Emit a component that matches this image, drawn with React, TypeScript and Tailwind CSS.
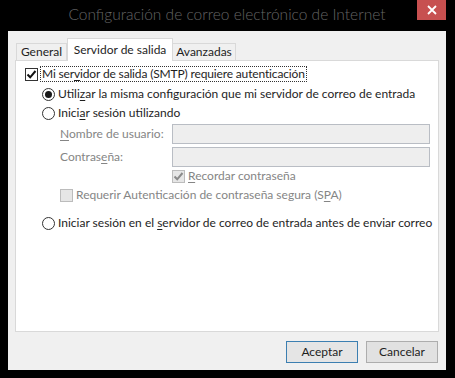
import { ReactNode } from "react";

const FONT = "font-['Lato','Liberation_Sans',sans-serif]";

function Check({ checked, disabled }: { checked?: boolean; disabled?: boolean }) {
  return (
    <span
      className={`w-[13px] h-[13px] shrink-0 border flex items-center justify-center ${
        disabled ? "border-[#bcbcbc] bg-[#e6e6e6]" : "border-[#333333] bg-white"
      }`}
    >
      {checked && (
        <svg width="11" height="11" viewBox="0 0 11 11">
          <path
            d="M1.5 5.5 L4.2 8.3 L9.5 2"
            fill="none"
            stroke={disabled ? "#8a8a8a" : "#111111"}
            strokeWidth="2"
          />
        </svg>
      )}
    </span>
  );
}

function Radio({ checked }: { checked?: boolean }) {
  return (
    <span className="w-[13px] h-[13px] shrink-0 rounded-full border border-[#333333] bg-white flex items-center justify-center">
      {checked && <span className="w-[7px] h-[7px] rounded-full bg-[#1a1a1a]" />}
    </span>
  );
}

function U({ children }: { children: ReactNode }) {
  return <span className="underline underline-offset-2">{children}</span>;
}

export default function App() {
  return (
    <div className={`w-[455px] h-[378px] bg-black ${FONT} text-[12px] text-[#1e1e1e] whitespace-nowrap overflow-hidden`}>
      {/* barra de título */}
      <div className="h-[31px] flex items-start pl-[8px]">
        <div className="flex-1 h-[31px] flex items-center justify-center text-[15.5px] font-light text-[#646464] leading-none pb-[2px] pl-[29px]">
          Configuración de correo electrónico de Internet
        </div>
        <div className="w-[29px] h-[20px] bg-[#c75050] flex items-center justify-center mr-[9px]">
          <svg width="10" height="10" viewBox="0 0 10 10">
            <path d="M1 1 L9 9 M9 1 L1 9" stroke="white" strokeWidth="1.8" />
          </svg>
        </div>
      </div>

      {/* área cliente */}
      <div className="ml-[8px] w-[438px] h-[339px] bg-[#f0f0f0] flex flex-col px-[7px]">
        {/* pestañas */}
        <div className="h-[29px] flex items-end pl-[1px]">
          <div className="h-[17px] w-[51px] border border-b-0 border-[#d9d9d9] bg-[#f0f0f0] flex items-center justify-center">
            General
          </div>
          <div className="relative z-10 -mb-px h-[23px] w-[106px] border border-b-0 border-[#d9d9d9] bg-white flex items-start justify-center pt-[2px]">
            Servidor de salida
          </div>
          <div className="h-[17px] w-[63px] border border-b-0 border-l-0 border-[#d9d9d9] bg-[#f0f0f0] flex items-center justify-center">
            Avanzadas
          </div>
        </div>

        {/* panel */}
        <div className="h-[272px] border border-[#d9d9d9] bg-white flex flex-col">
          <div className="mt-[5px] h-[16px] flex items-center pl-[9px]">
            <Check checked />
            <span className="ml-[2px] px-[1px] border border-dotted border-[#333333] leading-[14px] tracking-[-0.15px]">
              Mi ser<U>v</U>idor de salida (SMTP) requiere autenticación
            </span>
          </div>
          <div className="mt-[4px] h-[16px] flex items-center pl-[26px] gap-[3px]">
            <Radio checked />
            <span>
              Utili<U>z</U>ar la misma configuración que mi servidor de correo de entrada
            </span>
          </div>
          <div className="mt-[3px] h-[16px] flex items-center pl-[26px] gap-[3px]">
            <Radio />
            <span>
              Inici<U>a</U>r sesión utilizando
            </span>
          </div>
          <div className="mt-[3px] h-[20px] flex items-center pl-[44px] pr-[8px] text-[#858585]">
            <span className="w-[112px]">
              <U>N</U>ombre de usuario:
            </span>
            <span className="flex-1 h-[20px] border border-[#b9bdc4] bg-[#eeeeee]" />
          </div>
          <div className="mt-[3px] h-[20px] flex items-center pl-[44px] pr-[8px] text-[#858585]">
            <span className="w-[112px]">
              Contras<U>e</U>ña:
            </span>
            <span className="flex-1 h-[20px] border border-[#b9bdc4] bg-[#eeeeee]" />
          </div>
          <div className="mt-[1px] h-[16px] flex items-center pl-[156px] gap-[3px] text-[#858585]">
            <Check checked disabled />
            <span>
              <U>R</U>ecordar contraseña
            </span>
          </div>
          <div className="mt-[3px] h-[16px] flex items-center pl-[44px] gap-[3px] text-[#858585]">
            <Check disabled />
            <span>
              Requerir Autenticación de contraseña segura (S<U>P</U>A)
            </span>
          </div>
          <div className="mt-[12px] h-[16px] flex items-center pl-[26px] gap-[3px]">
            <Radio />
            <span>
              Iniciar sesión en el <U>s</U>ervidor de correo de entrada antes de enviar correo
            </span>
          </div>
        </div>

        {/* botones */}
        <div className="mt-[9px] flex justify-end gap-[8px] pr-[1px]">
          <button className="w-[72px] h-[22px] border border-[#3c7fb1] bg-[#e5e5e5]">Aceptar</button>
          <button className="w-[72px] h-[22px] border border-[#adadad] bg-[#e1e1e1]">Cancelar</button>
        </div>
      </div>
    </div>
  );
}
